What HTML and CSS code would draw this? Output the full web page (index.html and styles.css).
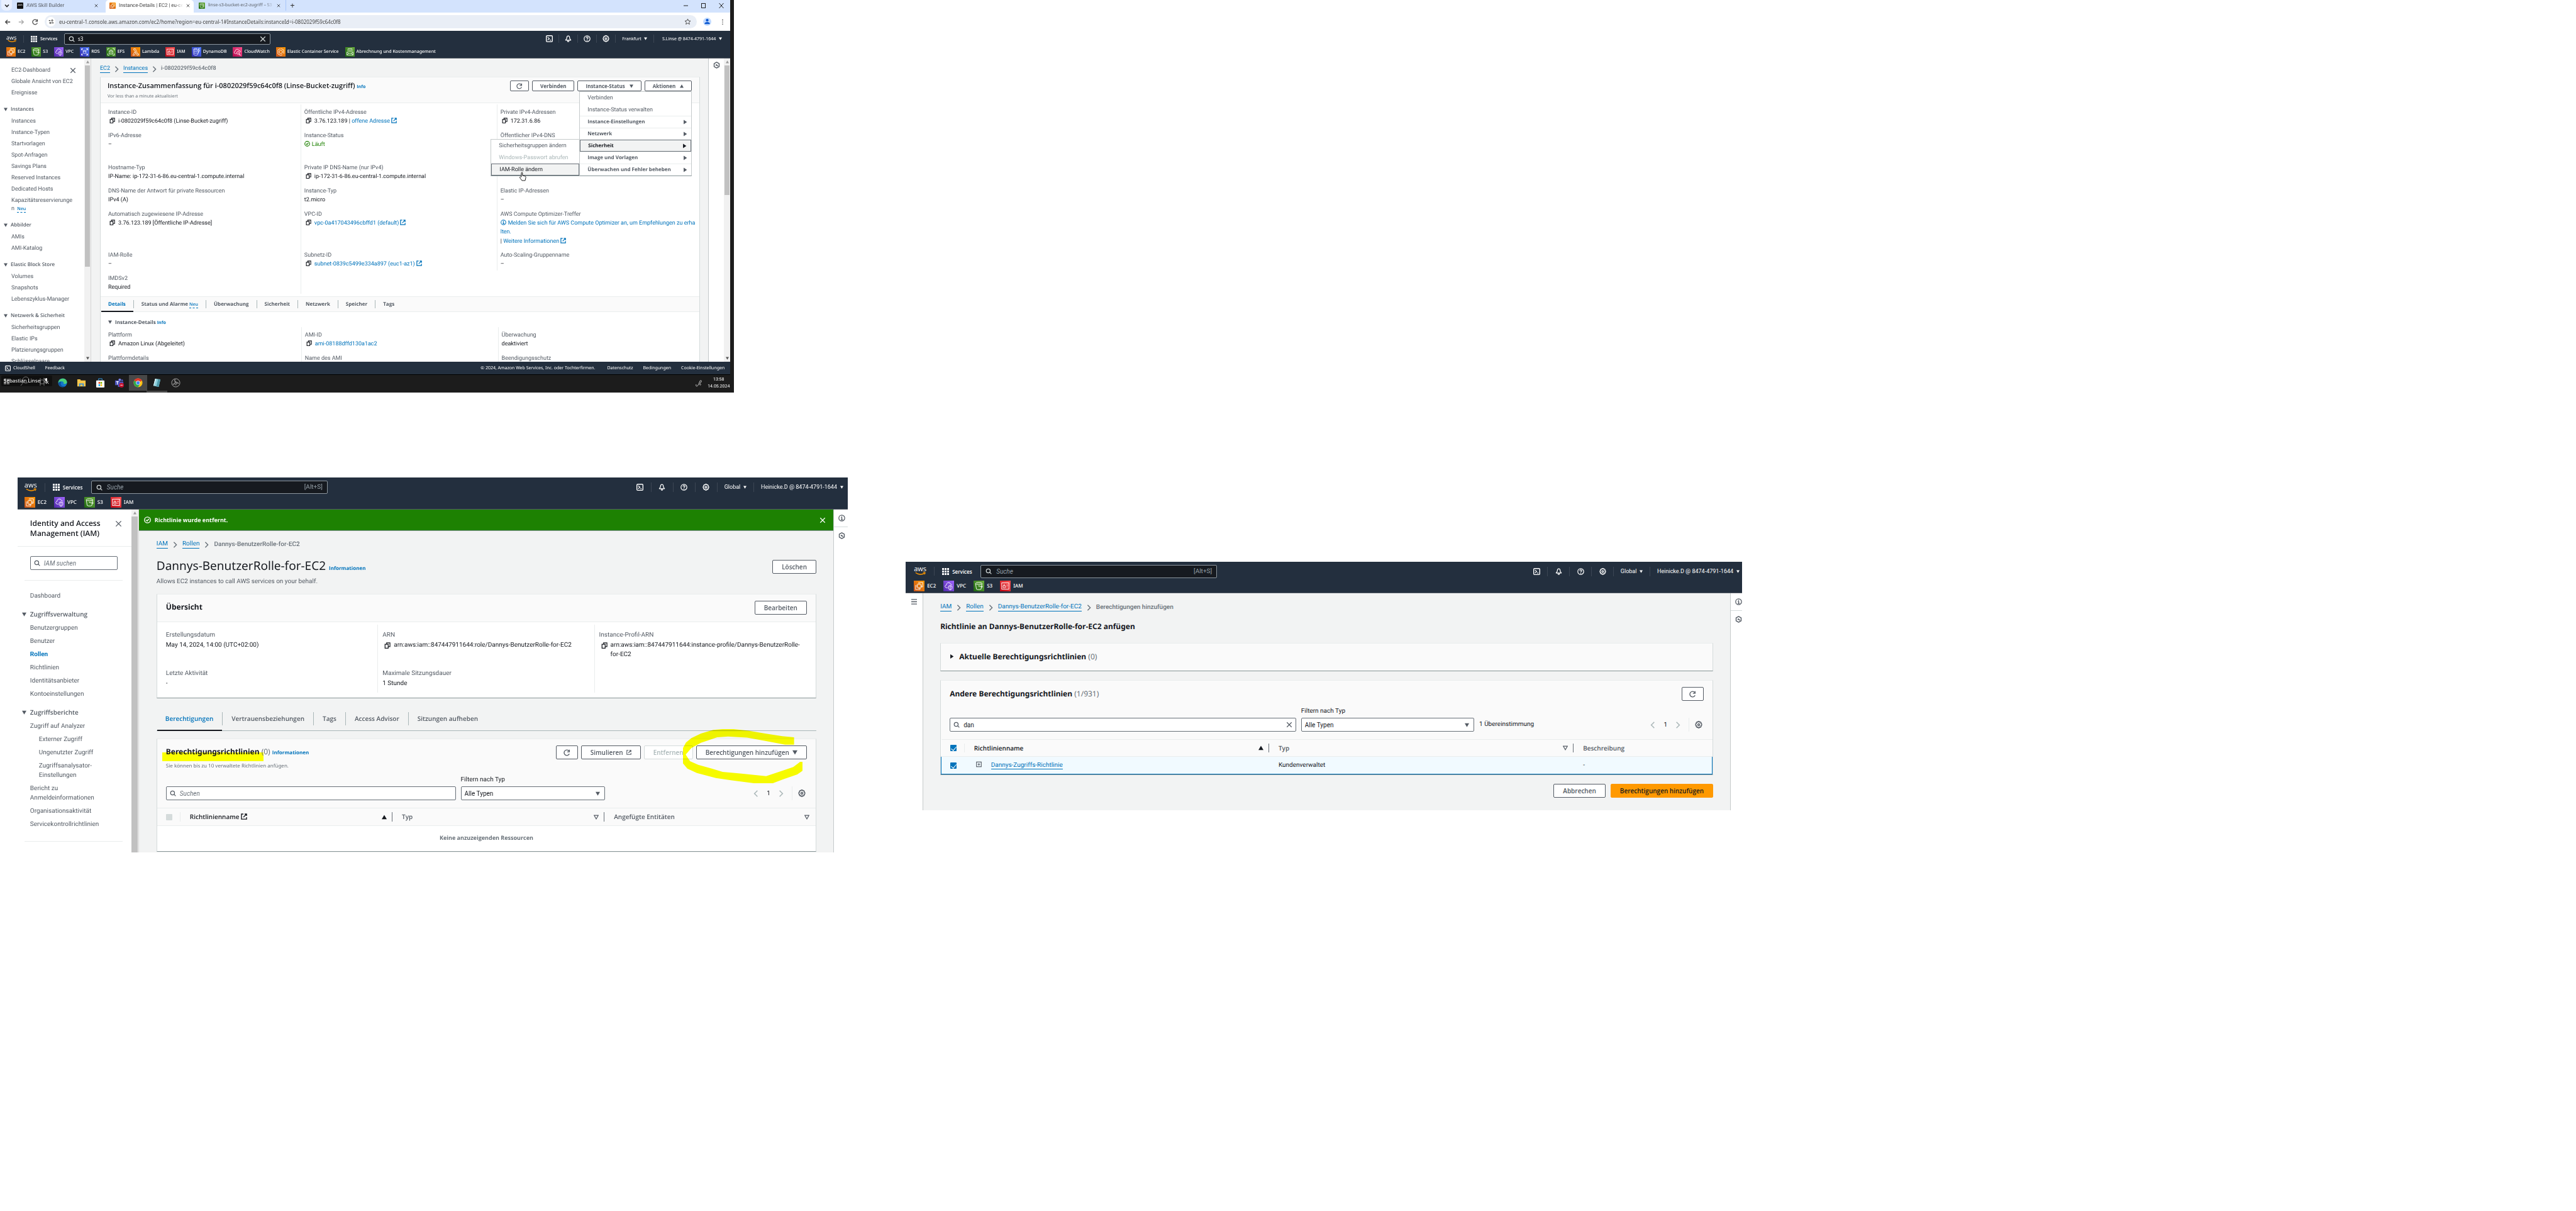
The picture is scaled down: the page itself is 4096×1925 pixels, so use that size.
FILE: index.html
```html
<!DOCTYPE html>
<html lang="de">
<head>
<meta charset="utf-8">
<meta name="viewport" content="width=device-width, initial-scale=1">
<title>AWS – EC2 und IAM</title>
<link rel="stylesheet" href="styles.css">
</head>
<body>
<svg class="defs" aria-hidden="true">
  <symbol id="smile" viewBox="0 0 20 7"><path d="M1 1.5C6 5.4 13 5.6 17.6 2.6" fill="none" stroke="#f90" stroke-width="1.7"/><path d="M14.8 1.2c1.6-.5 3.4-.5 3.8 0s-.2 2.400-1.300 3.600" fill="none" stroke="#f90" stroke-width="1.300"/></symbol>
  <symbol id="grid" viewBox="0 0 11 11"><path d="M0 0h3v3H0zM4 0h3v3H4zM8 0h3v3H8zM0 4h3v3H0zM4 4h3v3H4zM8 4h3v3H8zM0 8h3v3H0zM4 8h3v3H4zM8 8h3v3H8z" fill="currentColor"/></symbol>
  <symbol id="search" viewBox="0 0 16 16"><circle cx="7" cy="7" r="5" fill="none" stroke="currentColor" stroke-width="2"/><path d="M11 11l4 4" stroke="currentColor" stroke-width="2"/></symbol>
  <symbol id="x" viewBox="0 0 16 16"><path d="M2 2l12 12M14 2L2 14" stroke="currentColor" stroke-width="2" fill="none"/></symbol>
  <symbol id="shell" viewBox="0 0 16 16"><rect x="1" y="1" width="14" height="14" rx="2" fill="none" stroke="currentColor" stroke-width="2"/><path d="M4 4.500l4 3.500-4 3.500M9 11.500h3" fill="none" stroke="currentColor" stroke-width="1.800"/></symbol>
  <symbol id="bell" viewBox="0 0 16 16"><path d="M8 1.500c-2.600 0-3.200 2.200-3.200 4.500 0 2-1.300 3.500-2.800 5.300h12c-1.500-1.800-2.800-3.300-2.800-5.300 0-2.300-.6-4.500-3.200-4.500z" fill="none" stroke="currentColor" stroke-width="1.800" stroke-linejoin="round"/><path d="M6.500 11.500v2.500c.6 1.200 2.400 1.200 3 0v-2.500" fill="none" stroke="currentColor" stroke-width="1.800"/></symbol>
  <symbol id="help" viewBox="0 0 16 16"><circle cx="8" cy="8" r="6.800" fill="none" stroke="currentColor" stroke-width="1.800"/><path d="M5.800 6.500c0-3 4.500-3 4.500-.4 0 1.500-2.200 1.600-2.200 3.300M8 11v1.700" fill="none" stroke="currentColor" stroke-width="1.800"/></symbol>
  <symbol id="gear" viewBox="0 0 16 16"><path d="M6.700 1h2.600l.5 1.800 1.700-.8 1.900 1.900-.9 1.700 1.900.6v3.200l-1.900.5.9 1.800-1.900 1.900-1.700-.9-.5 1.900H6.700l-.5-1.900-1.700.9-1.900-1.900.9-1.800-1.900-.5V6.200l1.900-.6-.9-1.700L4.500 2l1.700.8z" fill="none" stroke="currentColor" stroke-width="1.800" stroke-linejoin="round"/><circle cx="8" cy="8" r="2" fill="none" stroke="currentColor" stroke-width="1.800"/></symbol>
  <symbol id="down" viewBox="0 0 10 10"><path d="M0 1h10L5 9.500z" fill="currentColor"/></symbol>
  <symbol id="up" viewBox="0 0 10 10"><path d="M0 9h10L5 .5z" fill="currentColor"/></symbol>
  <symbol id="right" viewBox="0 0 10 10"><path d="M1.500 0v10L9 5z" fill="currentColor"/></symbol>
  <symbol id="sort" viewBox="0 0 10 10"><path d="M1 1.500h8L5 8.500z" fill="none" stroke="currentColor" stroke-width="1.500"/></symbol>
  <symbol id="chev" viewBox="0 0 10 14"><path d="M2 1l6 6-6 6" fill="none" stroke="currentColor" stroke-width="2"/></symbol>
  <symbol id="chevl" viewBox="0 0 10 14"><path d="M8 1L2 7l6 6" fill="none" stroke="currentColor" stroke-width="2"/></symbol>
  <symbol id="copy" viewBox="0 0 16 16"><path d="M2 5h8v10H2zM6 5V1.500h8.500V11H10" fill="none" stroke="currentColor" stroke-width="2"/></symbol>
  <symbol id="ext" viewBox="0 0 16 16"><path d="M6.500 1.500h-5v13h13v-5M9.500 1.500h5v5M14 2L6.500 9.500" fill="none" stroke="currentColor" stroke-width="2.200"/></symbol>
  <symbol id="reload" viewBox="0 0 16 16"><path d="M13.500 10.500A6.300 6.300 0 1 1 12.600 4M13.500 1v5h-5" fill="none" stroke="currentColor" stroke-width="2"/></symbol>
  <symbol id="ok" viewBox="0 0 16 16"><circle cx="8" cy="8" r="6.800" fill="none" stroke="currentColor" stroke-width="2"/><path d="M4.800 8l2.400 2.500 4-5" fill="none" stroke="currentColor" stroke-width="2"/></symbol>
  <symbol id="info" viewBox="0 0 16 16"><circle cx="8" cy="8" r="6.800" fill="none" stroke="currentColor" stroke-width="1.800"/><path d="M6 7h2.200v4.500M5.800 11.700h4.700M8 3.500v2" fill="none" stroke="currentColor" stroke-width="1.800"/></symbol>
  <symbol id="hex" viewBox="0 0 16 16"><path d="M8 1.200l5.800 3.300v7L8 14.800 2.200 11.500v-7z" fill="none" stroke="currentColor" stroke-width="2" stroke-linejoin="round"/><path d="M7 7.300l4.500 3.200" stroke="currentColor" stroke-width="2"/><circle cx="7.500" cy="7.800" r="1.800" fill="currentColor"/></symbol>
  <symbol id="s-ec2" viewBox="0 0 24 24"><path d="M10 4h10v10h-4M4 10v10h10v-3" fill="none" stroke="#fff" stroke-width="1.200"/><rect x="8" y="8" width="8" height="8" rx="1" fill="none" stroke="#fff" stroke-width="1.200"/><path d="M10 8V6M12 8V6M14 8V6M10 18v-2M12 18v-2M14 18v-2M8 10H6M8 12H6M8 14H6M18 10h-2M18 12h-2M18 14h-2" stroke="#fff"/></symbol>
  <symbol id="s-s3" viewBox="0 0 24 24"><path d="M4.500 6.500l2 12.500c2 1.600 8.500 1.600 10.500 0l2-12.500" fill="none" stroke="#fff" stroke-width="1.300"/><ellipse cx="11.800" cy="6.200" rx="7.300" ry="2.200" fill="none" stroke="#fff" stroke-width="1.300"/><path d="M12 12l8 2.500c1.200-.8-.5-2-2-2.800" fill="none" stroke="#fff" stroke-width="1.200"/><circle cx="11.800" cy="12" r="1" fill="#fff"/></symbol>
  <symbol id="s-vpc" viewBox="0 0 24 24"><path d="M9.500 16H7.500C2.500 15.500 3 10 6.700 10 6.500 3.500 15 2.500 16.500 8.200c1.300-.4 2.500.3 2.800 1.500" fill="none" stroke="#fff" stroke-width="1.300"/><path d="M15.500 11l4 1.500V17c0 2-2.500 3.200-4 4-1.500-.8-4-2-4-4v-4.500zM15.500 11v10" fill="none" stroke="#fff" stroke-width="1.300"/></symbol>
  <symbol id="s-rds" viewBox="0 0 24 24"><path d="M4 8V4h4M4 4l4 4M20 8V4h-4M20 4l-4 4M4 16v4h4M4 20l4-4M20 16v4h-4M20 20l-4-4M8.500 9.500v5.500c1.500 1.500 5.500 1.500 7 0V9.500" fill="none" stroke="#fff" stroke-width="1.200"/><ellipse cx="12" cy="9.500" rx="3.500" ry="1.400" fill="none" stroke="#fff" stroke-width="1.200"/></symbol>
  <symbol id="s-efs" viewBox="0 0 24 24"><path d="M3.500 8V3.500H8M16 3.500h4.500V8M3.500 16v4.500H8M16 20.500h4.500V16M7.500 10v7.500h9V10zM9 10c0-4 6-4 6 0M10 14h4" fill="none" stroke="#fff" stroke-width="1.300"/></symbol>
  <symbol id="s-lambda" viewBox="0 0 24 24"><path d="M7.500 4h4.200l6 13.500 2-.7.8 2.700-4.500 1.300L10 7.500H7.500zM10 11.500L5 20.500h4l3-5.500z" fill="none" stroke="#fff" stroke-width="1.200"/></symbol>
  <symbol id="s-iam" viewBox="0 0 24 24"><rect x="4" y="5" width="16" height="14" fill="none" stroke="#fff" stroke-width="1.300"/><path d="M7 11.500h5V16H7zM8 11.500C8 7.500 11 7.500 11 11.500M14.500 10H18M14.500 14H17" fill="none" stroke="#fff" stroke-width="1.200"/></symbol>
  <symbol id="s-ddb" viewBox="0 0 24 24"><path d="M5 5v14c2 2 8 2 10 0v-4M5 9.500c2 1.500 6 1.500 8 .5M5 14c2 1.500 6 1.500 8 .5M18 3l-4 7h3l-1.500 6L20 8h-3l2-5z" fill="none" stroke="#fff" stroke-width="1.200"/><ellipse cx="9.500" cy="5" rx="4.500" ry="1.600" fill="none" stroke="#fff" stroke-width="1.200"/></symbol>
  <symbol id="s-cw" viewBox="0 0 24 24"><path d="M9 16.500H7C2.500 16 3 10.500 6.500 10.500 6.500 4 14.500 3.500 16 9c3-.7 4.500 2 3.500 4" fill="none" stroke="#fff" stroke-width="1.300"/><circle cx="13.500" cy="14.500" r="3.300" fill="none" stroke="#fff" stroke-width="1.300"/><path d="M16 17l4 4" stroke="#fff" stroke-width="1.800"/></symbol>
  <symbol id="s-ecs" viewBox="0 0 24 24"><path d="M11 3.500L4.500 7v10l7.500 4 4-2.200M13 3.500L19.500 7v9.500M12 7.500l4 2.200v4.600l-4 2.200-4-2.200V9.700z" fill="none" stroke="#fff" stroke-width="1.300"/></symbol>
  <symbol id="s-bill" viewBox="0 0 24 24"><path d="M7 13V4h10v9M4 12.500V20h16v-7.500l-4 3H8zM9.500 7.500h5M9.500 10.500h5M4 20l5-4.500M20 20l-5-4.500" fill="none" stroke="#fff" stroke-width="1.200"/></symbol>
</svg>

<main class="canvas">

<!-- EC2-Instance im Browser -->
<section class="shot shot-ec2" aria-label="EC2-Instance">
  <div class="browser">
    <div class="tabstrip">
      <button class="tab-menu" aria-label="Tabs durchsuchen"><svg viewBox="0 0 10 10"><path d="M2 3.500l3 3 3-3" fill="none" stroke="#222" stroke-width="1.600"/></svg></button>
      <div class="btab"><span class="fav-dark">aws</span><span class="btab-t">AWS Skill Builder</span><svg class="bx"><use href="#x"/></svg></div>
      <div class="btab active"><svg class="fi orange"><use href="#s-ec2"/></svg><span class="btab-t fade">Instance-Details | EC2 | eu-cent</span><svg class="bx"><use href="#x"/></svg></div>
      <div class="btab"><svg class="fi green"><use href="#s-s3"/></svg><span class="btab-t fade">linse-s3-bucket-ec2-zugriff – S3</span><svg class="bx"><use href="#x"/></svg></div>
      <button class="plus" aria-label="Neuer Tab">+</button>
      <div class="winctl"><svg viewBox="0 0 12 12"><path d="M2 6h7" stroke="#222"/></svg><svg viewBox="0 0 12 12"><rect x="2.500" y="2.500" width="6" height="7" fill="none" stroke="#222"/></svg><svg viewBox="0 0 12 12"><path d="M2.500 2l7 8M9.500 2l-7 8" stroke="#222"/></svg></div>
    </div>
    <div class="toolbar">
      <svg class="tb" viewBox="0 0 12 12"><path d="M11 6H2M6 2L2 6l4 4" fill="none" stroke="#444" stroke-width="1.600"/></svg>
      <svg class="tb" viewBox="0 0 12 12"><path d="M1 6h9M6 2l4 4-4 4" fill="none" stroke="#aaa" stroke-width="1.600"/></svg>
      <svg class="tb"><use href="#reload"/></svg>
      <div class="urlbar"><span class="site"><svg viewBox="0 0 12 12"><path d="M1 3.500h3M7 8.500h4" stroke="#333" stroke-width="1.500"/><circle cx="8" cy="3.500" r="1.500" fill="none" stroke="#333" stroke-width="1.300"/><circle cx="4" cy="8.500" r="1.500" fill="none" stroke="#333" stroke-width="1.300"/></svg></span><input class="url" aria-label="Adresse" value="eu-central-1.console.aws.amazon.com/ec2/home?region=eu-central-1#InstanceDetails:instanceId=i-0802029f59c64c0f8"><svg class="star" viewBox="0 0 12 12"><path d="M6 1.200l1.400 3.200 3.500.3-2.600 2.300.8 3.400L6 8.600l-3.100 1.800.8-3.400L1.100 4.700l3.500-.3z" fill="none" stroke="#444"/></svg></div>
      <span class="avatar"><svg viewBox="0 0 12 12"><circle cx="6" cy="3.800" r="2" fill="#0b57d0"/><path d="M2 9.500c0-4 8-4 8 0z" fill="#0b57d0"/></svg></span>
      <svg class="dots" viewBox="0 0 4 12"><circle cx="2" cy="2" r="1" fill="#444"/><circle cx="2" cy="6" r="1" fill="#444"/><circle cx="2" cy="10" r="1" fill="#444"/></svg>
    </div>
    <header class="aws">
      <div class="aws-top">
        <a href="#" class="logo"><span>aws</span><svg><use href="#smile"/></svg></a>
        <button class="services"><svg><use href="#grid"/></svg>Services</button>
        <label class="gsearch"><svg><use href="#search"/></svg><input value="s3" aria-label="Suche"><svg><use href="#x"/></svg></label>
        <div class="tools"><button aria-label="CloudShell"><svg><use href="#shell"/></svg></button><button aria-label="Benachrichtigungen"><svg><use href="#bell"/></svg></button><button aria-label="Hilfe"><svg><use href="#help"/></svg></button><button aria-label="Einstellungen"><svg><use href="#gear"/></svg></button><button class="wide">Frankfurt<svg><use href="#down"/></svg></button><button class="user">S.Linse @ 8474-4791-1644<svg><use href="#down"/></svg></button></div>
      </div>
      <nav class="favs">
        <a href="#"><svg class="orange"><use href="#s-ec2"/></svg>EC2</a><a href="#"><svg class="green"><use href="#s-s3"/></svg>S3</a><a href="#"><svg class="violet"><use href="#s-vpc"/></svg>VPC</a><a href="#"><svg class="blue"><use href="#s-rds"/></svg>RDS</a><a href="#"><svg class="green"><use href="#s-efs"/></svg>EFS</a><a href="#"><svg class="orange"><use href="#s-lambda"/></svg>Lambda</a><a href="#"><svg class="red"><use href="#s-iam"/></svg>IAM</a><a href="#"><svg class="blue"><use href="#s-ddb"/></svg>DynamoDB</a><a href="#"><svg class="pink"><use href="#s-cw"/></svg>CloudWatch</a><a href="#"><svg class="orange"><use href="#s-ecs"/></svg>Elastic Container Service</a><a href="#"><svg class="green"><use href="#s-bill"/></svg>Abrechnung und Kostenmanagement</a>
      </nav>
    </header>
    <div class="work">
      <nav class="side">
        <svg class="side-x"><use href="#x"/></svg>
        <ul><li><a href="#">EC2-Dashboard</a></li><li><a href="#">Globale Ansicht von EC2</a></li><li><a href="#">Ereignisse</a></li></ul>
        <h3><svg><use href="#down"/></svg>Instances</h3>
        <ul><li><a href="#">Instances</a></li><li><a href="#">Instance-Typen</a></li><li><a href="#">Startvorlagen</a></li><li><a href="#">Spot-Anfragen</a></li><li><a href="#">Savings Plans</a></li><li><a href="#">Reserved Instances</a></li><li><a href="#">Dedicated Hosts</a></li><li><a href="#">Kapazitätsreservierunge<br>n</a> <a href="#" class="neu">Neu</a></li></ul>
        <h3><svg><use href="#down"/></svg>Abbilder</h3>
        <ul><li><a href="#">AMIs</a></li><li><a href="#">AMI-Katalog</a></li></ul>
        <h3><svg><use href="#down"/></svg>Elastic Block Store</h3>
        <ul><li><a href="#">Volumes</a></li><li><a href="#">Snapshots</a></li><li><a href="#">Lebenszyklus-Manager</a></li></ul>
        <h3><svg><use href="#down"/></svg>Netzwerk &amp; Sicherheit</h3>
        <ul><li><a href="#">Sicherheitsgruppen</a></li><li><a href="#">Elastic IPs</a></li><li><a href="#">Platzierungsgruppen</a></li><li><a href="#">Schlüsselpaare</a></li></ul>
      </nav>
      <div class="sbar"><svg><use href="#up"/></svg><i class="thumb long"></i><svg class="dn"><use href="#down"/></svg></div>
      <div class="page">
        <nav class="crumbs"><a href="#">EC2</a><svg><use href="#chev"/></svg><a href="#">Instances</a><svg><use href="#chev"/></svg><b>i-0802029f59c64c0f8</b></nav>
        <article class="card">
          <div class="card-head">
            <div><h2>Instance-Zusammenfassung für i-0802029f59c64c0f8 (Linse-Bucket-zugriff) <a href="#" class="inf">Info</a></h2><p class="sub">Vor less than a minute aktualisiert</p></div>
            <div class="btns"><button class="btn sq" aria-label="Aktualisieren"><svg><use href="#reload"/></svg></button><button class="btn">Verbinden</button><button class="btn">Instance-Status<svg><use href="#down"/></svg></button><button class="btn">Aktionen<svg><use href="#up"/></svg></button></div>
          </div>
          <div class="cols">
            <dl>
              <div><dt>Instance-ID</dt><dd><svg><use href="#copy"/></svg>i-0802029f59c64c0f8 (Linse-Bucket-zugriff)</dd></div>
              <div class="tall"><dt>IPv6-Adresse</dt><dd>–</dd></div>
              <div><dt>Hostname-Typ</dt><dd>IP-Name: ip-172-31-6-86.eu-central-1.compute.internal</dd></div>
              <div><dt>DNS-Name der Antwort für private Ressourcen</dt><dd>IPv4 (A)</dd></div>
              <div class="taller"><dt>Automatisch zugewiesene IP-Adresse</dt><dd><svg><use href="#copy"/></svg>3.76.123.189 [Öffentliche IP-Adresse]</dd></div>
              <div><dt>IAM-Rolle</dt><dd>–</dd></div>
              <div><dt>IMDSv2</dt><dd>Required</dd></div>
            </dl>
            <dl>
              <div><dt>Öffentliche IPv4-Adresse</dt><dd><svg><use href="#copy"/></svg>3.76.123.189 | <a href="#">offene Adresse<svg><use href="#ext"/></svg></a></dd></div>
              <div class="tall"><dt>Instance-Status</dt><dd class="run"><svg><use href="#ok"/></svg>Läuft</dd></div>
              <div><dt>Private IP DNS-Name (nur IPv4)</dt><dd><svg><use href="#copy"/></svg>ip-172-31-6-86.eu-central-1.compute.internal</dd></div>
              <div><dt>Instance-Typ</dt><dd>t2.micro</dd></div>
              <div class="taller"><dt>VPC-ID</dt><dd><svg><use href="#copy"/></svg><a href="#">vpc-0a417043496cbffd1 (default)<svg><use href="#ext"/></svg></a></dd></div>
              <div><dt>Subnetz-ID</dt><dd><svg><use href="#copy"/></svg><a href="#">subnet-0839c5499e334a897 (euc1-az1)<svg><use href="#ext"/></svg></a></dd></div>
            </dl>
            <dl>
              <div><dt>Private IPv4-Adressen</dt><dd><svg><use href="#copy"/></svg>172.31.6.86</dd></div>
              <div class="tall"><dt>Öffentlicher IPv4-DNS</dt></div>
              <div><dt></dt></div>
              <div><dt>Elastic IP-Adressen</dt><dd>–</dd></div>
              <div class="taller"><dt>AWS Compute Optimizer-Treffer</dt><dd><a href="#"><svg class="ii"><use href="#info"/></svg>Melden Sie sich für AWS Compute Optimizer an, um Empfehlungen zu erha<br>lten.</a></dd><dd class="more">| <a href="#">Weitere Informationen<svg><use href="#ext"/></svg></a></dd></div>
              <div><dt>Auto-Scaling-Gruppenname</dt><dd>–</dd></div>
            </dl>
          </div>
          <nav class="tabs"><a href="#" class="on">Details</a><a href="#">Status und Alarme <span class="neu">Neu</span></a><a href="#">Überwachung</a><a href="#">Sicherheit</a><a href="#">Netzwerk</a><a href="#">Speicher</a><a href="#">Tags</a></nav>
          <h3 class="sect"><svg><use href="#down"/></svg>Instance-Details <a href="#" class="inf">Info</a></h3>
          <div class="cols more-cols">
            <dl><div><dt>Plattform</dt><dd><svg><use href="#copy"/></svg>Amazon Linux (Abgeleitet)</dd></div><div><dt>Plattformdetails</dt></div></dl>
            <dl><div><dt>AMI-ID</dt><dd><svg><use href="#copy"/></svg><a href="#">ami-08188dffd130a1ac2</a></dd></div><div><dt>Name des AMI</dt></div></dl>
            <dl><div><dt>Überwachung</dt><dd>deaktiviert</dd></div><div><dt>Beendigungsschutz</dt></div></dl>
          </div>
          <ul class="menu">
            <li>Verbinden</li><li>Instance-Status verwalten</li><li class="g">Instance-Einstellungen<svg><use href="#right"/></svg></li><li class="g">Netzwerk<svg><use href="#right"/></svg></li><li class="g sel">Sicherheit<svg><use href="#right"/></svg></li><li class="g">Image und Vorlagen<svg><use href="#right"/></svg></li><li class="g">Überwachen und Fehler beheben<svg><use href="#right"/></svg></li>
          </ul>
          <ul class="menu submenu"><li>Sicherheitsgruppen ändern</li><li class="off">Windows-Passwort abrufen</li><li class="sel">IAM-Rolle ändern</li></ul>
          <svg class="cursor" viewBox="0 0 12 15"><path d="M4 8V2c0-1.300 1.800-1.300 1.800 0v4l4 1c1.200.4 1.400 1 1.200 2.500L10 14H5L1.500 9.500c-.6-1 .6-1.800 1.300-1z" fill="#fff" stroke="#222"/></svg>
        </article>
      </div>
      <div class="rail"><svg><use href="#hex"/></svg></div>
      <div class="sbar"><svg><use href="#up"/></svg><i class="thumb"></i><svg class="dn"><use href="#down"/></svg></div>
    </div>
    <footer class="foot"><a href="#"><svg><use href="#shell"/></svg>CloudShell</a><a href="#">Feedback</a><span class="copyr">© 2024, Amazon Web Services, Inc. oder Tochterfirmen.</span><a href="#">Datenschutz</a><a href="#">Bedingungen</a><a href="#">Cookie-Einstellungen</a></footer>
  </div>
  <div class="taskbar">
    <div class="who"><svg class="ghost" viewBox="0 0 80 17"><path d="M4 5h4v4H4zM9 5h4v4H9zM4 10h4v4H4zM9 10h4v4H9z" fill="#777"/><circle cx="39" cy="7" r="5" fill="none" stroke="#777"/><path d="M35 11l-4 5M62 4v12M68 4v12M62 7h6v6h-6z" fill="none" stroke="#777"/></svg><span>Sebastian Linse</span><svg viewBox="0 0 12 12"><rect x="4.500" y="1" width="3" height="6" rx="1.500" fill="#fff"/><path d="M3 6c0 4 6 4 6 0M6 9v2M2 1l8 10" fill="none" stroke="#fff"/></svg></div>
    <svg class="app" viewBox="0 0 16 16"><circle cx="8" cy="8" r="7.500" fill="#1477c9"/><path d="M1 6C3-1 15-1 15.500 7c0 3-4 3.500-6 2.500 1-2 0-4-3-4C4 5.500 2 6 1 9z" fill="#4bd07a"/><path d="M6 7c-3 3 0 8 6 7-3 2-11 1-11-5 1-3 3-3.500 5-2z" fill="#0c4fa0"/></svg>
    <svg class="app" viewBox="0 0 16 16"><path d="M1 2h5l1 2h8v10H1z" fill="#f7c64a"/><path d="M4 14v-5h8v5h-2v-3H6v3z" fill="#3b8fd6"/></svg>
    <svg class="app" viewBox="0 0 16 16"><path d="M5 4V1h6v3" fill="none" stroke="#3aa0e8"/><rect x="1" y="4" width="14" height="12" rx="1" fill="#fff"/><path d="M5 6.500h2.700v3H5z" fill="#f25022"/><path d="M8.300 6.500H11v3H8.300z" fill="#7fba00"/><path d="M5 10.500h2.700v3H5z" fill="#00a4ef"/><path d="M8.300 10.500H11v3H8.300z" fill="#ffb900"/></svg>
    <svg class="app" viewBox="0 0 16 16"><circle cx="9" cy="3" r="2.200" fill="#7b83eb"/><circle cx="13" cy="4" r="1.500" fill="#5059c9"/><path d="M6 6h9v6l-4 3H6z" fill="#5059c9"/><rect x="1" y="4" width="8" height="8" fill="#4b53bc"/><path d="M3 6h4M5 6v5" stroke="#fff" stroke-width="1.200"/><circle cx="12" cy="12" r="4" fill="#c4122f"/><path d="M10 12h4" stroke="#fff"/></svg>
    <span class="app-on"><svg class="app" viewBox="0 0 16 16"><circle cx="8" cy="8" r="7.500" fill="#fbc116"/><path d="M8 8L1.500 4.300C4-1 12-1 14.500 4.300z" fill="#e33b2e"/><path d="M8 8L1.500 4.300C-1 9 2 15 8 15.500L11 10z" fill="#2da94f"/><circle cx="8" cy="8" r="3.500" fill="#fff"/><circle cx="8" cy="8" r="2.800" fill="#4285f4"/></svg></span>
    <span class="app-np"><svg class="app" viewBox="0 0 16 16"><path d="M5 1l9 1-3 13-9-2z" fill="#8fd0dc"/><path d="M5 1l2 0-4 12-1 0z" fill="#dff3f6"/><path d="M10 2l4 0-3 13-4-1z" fill="#4f9aab"/></svg></span>
    <svg class="app" viewBox="0 0 16 16"><circle cx="8" cy="8" r="7" fill="#222" stroke="#aaa"/><path d="M7 2c-2 3 0 5 3 5M13 9c-3-2-5 0-5 3M3 10c3 1 4-1 4-4" fill="none" stroke="#aaa" stroke-width="1.200"/></svg>
    <div class="clock"><svg viewBox="0 0 12 12"><path d="M2 8c-1 2 0 3 1 3s3-3 4-6 2-4 3-3-1 3-2 5 0 3 2 1" fill="none" stroke="#ccc"/></svg><span>13:58<br>14.05.2024</span></div>
  </div>
</section>

<!-- IAM-Rolle -->
<section class="shot shot-role" aria-label="IAM-Rolle">
  <header class="aws">
    <div class="aws-top">
      <a href="#" class="logo"><span>aws</span><svg><use href="#smile"/></svg></a>
      <button class="services"><svg><use href="#grid"/></svg>Services</button>
      <label class="gsearch"><svg><use href="#search"/></svg><input placeholder="Suche" aria-label="Suche"><span>[Alt+S]</span></label>
      <div class="tools"><button aria-label="CloudShell"><svg><use href="#shell"/></svg></button><button aria-label="Benachrichtigungen"><svg><use href="#bell"/></svg></button><button aria-label="Hilfe"><svg><use href="#help"/></svg></button><button aria-label="Einstellungen"><svg><use href="#gear"/></svg></button><button class="wide">Global<svg><use href="#down"/></svg></button><button class="user">Heinicke.D @ 8474-4791-1644<svg><use href="#down"/></svg></button></div>
    </div>
    <nav class="favs"><a href="#"><svg class="orange"><use href="#s-ec2"/></svg>EC2</a><a href="#"><svg class="violet"><use href="#s-vpc"/></svg>VPC</a><a href="#"><svg class="green"><use href="#s-s3"/></svg>S3</a><a href="#"><svg class="red"><use href="#s-iam"/></svg>IAM</a></nav>
  </header>
  <div class="work">
    <nav class="side">
      <div class="side-title"><h2>Identity and Access Management (IAM)</h2><svg><use href="#x"/></svg></div>
      <label class="box side-search"><svg><use href="#search"/></svg><input placeholder="IAM suchen" aria-label="IAM suchen"></label>
      <hr>
      <ul class="first"><li><a href="#">Dashboard</a></li></ul>
      <h3><svg><use href="#down"/></svg>Zugriffsverwaltung</h3>
      <ul><li><a href="#">Benutzergruppen</a></li><li><a href="#">Benutzer</a></li><li><a href="#" class="cur">Rollen</a></li><li><a href="#">Richtlinien</a></li><li><a href="#">Identitätsanbieter</a></li><li><a href="#">Kontoeinstellungen</a></li></ul>
      <h3><svg><use href="#down"/></svg>Zugriffsberichte</h3>
      <ul><li><a href="#">Zugriff auf Analyzer</a></li><li class="in"><a href="#">Externer Zugriff</a></li><li class="in"><a href="#">Ungenutzter Zugriff</a></li><li class="in"><a href="#">Zugriffsanalysator-<br>Einstellungen</a></li><li><a href="#">Bericht zu<br>Anmeldeinformationen</a></li><li><a href="#">Organisationsaktivität</a></li><li><a href="#">Servicekontrollrichtlinien</a></li></ul>
      <hr>
    </nav>
    <div class="sbar"><svg><use href="#up"/></svg><i class="thumb full"></i></div>
    <div class="mainwrap">
      <div class="flash"><svg><use href="#ok"/></svg><b>Richtlinie wurde entfernt.</b><svg class="fx"><use href="#x"/></svg></div>
      <div class="page">
        <nav class="crumbs"><a href="#">IAM</a><svg><use href="#chev"/></svg><a href="#">Rollen</a><svg><use href="#chev"/></svg><b>Dannys-BenutzerRolle-for-EC2</b></nav>
        <div class="headline"><div><h1>Dannys-BenutzerRolle-for-EC2 <a href="#" class="inf">Informationen</a></h1><p>Allows EC2 instances to call AWS services on your behalf.</p></div><button class="btn">Löschen</button></div>
        <article class="card">
          <div class="card-head"><h2>Übersicht</h2><button class="btn">Bearbeiten</button></div>
          <div class="cols">
            <dl><div class="tall"><dt>Erstellungsdatum</dt><dd>May 14, 2024, 14:00 (UTC+02:00)</dd></div><div><dt>Letzte Aktivität</dt><dd>-</dd></div></dl>
            <dl><div class="tall"><dt>ARN</dt><dd class="cp"><svg><use href="#copy"/></svg>arn:aws:iam::847447911644:role/Dannys-BenutzerRolle-for-EC2</dd></div><div><dt>Maximale Sitzungsdauer</dt><dd>1 Stunde</dd></div></dl>
            <dl><div class="tall"><dt>Instance-Profil-ARN</dt><dd class="cp"><svg><use href="#copy"/></svg><span>arn:aws:iam::847447911644:instance-profile/Dannys-BenutzerRolle-<br>for-EC2</span></dd></div></dl>
          </div>
        </article>
        <nav class="tabs"><a href="#" class="on">Berechtigungen</a><a href="#">Vertrauensbeziehungen</a><a href="#">Tags</a><a href="#">Access Advisor</a><a href="#">Sitzungen aufheben</a></nav>
        <article class="card policies">
          <div class="card-head">
            <div><h2><span class="marked">Berechtigungsrichtlinien</span> <span class="n">(0)</span> <a href="#" class="inf">Informationen</a></h2><p class="sub">Sie können bis zu 10 verwaltete Richtlinien anfügen.</p></div>
            <div class="btns"><button class="btn sq" aria-label="Aktualisieren"><svg><use href="#reload"/></svg></button><button class="btn">Simulieren<svg><use href="#ext"/></svg></button><button class="btn" disabled>Entfernen</button><button class="btn">Berechtigungen hinzufügen<svg><use href="#down"/></svg></button></div>
          </div>
          <div class="filter">
            <label class="box grow"><svg><use href="#search"/></svg><input placeholder="Suchen" aria-label="Suchen"></label>
            <label class="fsel">Filtern nach Typ<span class="box"><select><option>Alle Typen</option></select><svg class="ca"><use href="#down"/></svg></span></label>
            <div class="pager"><svg><use href="#chevl"/></svg><b>1</b><svg><use href="#chev"/></svg><button aria-label="Einstellungen"><svg><use href="#gear"/></svg></button></div>
          </div>
          <table>
            <colgroup><col class="c0"><col class="c1"><col class="c1"><col></colgroup>
            <thead><tr><th><div class="th light"><input type="checkbox" aria-label="Alle auswählen" disabled></div></th><th><div class="th dark"><span>Richtlinienname <svg><use href="#ext"/></svg></span><svg><use href="#up"/></svg></div></th><th><div class="th">Typ<svg><use href="#sort"/></svg></div></th><th><div class="th last">Angefügte Entitäten<svg><use href="#sort"/></svg></div></th></tr></thead>
            <tbody><tr><td colspan="4" class="empty">Keine anzuzeigenden Ressourcen</td></tr></tbody>
          </table>
          <svg class="ring" viewBox="934 447 440 368" preserveAspectRatio="none"><path d="M1343 503L1300 495 1240 478 1175 458 1120 447 1080 447 1045 452 1000 477 965 508 945 538 934 575V680L950 715 985 745 1055 780 1110 795 1195 815H1265L1300 790 1355 755 1374 730V670H1365L1340 705 1275 745 1240 767 1150 750 1080 738 1040 715 990 690 960 665 944 620 965 575 1000 540 1060 503 1100 497 1170 505 1240 528 1310 553H1343z" fill="#fbff00"/></svg>
        </article>
      </div>
    </div>
    <div class="rail"><svg><use href="#info"/></svg><hr><svg><use href="#hex"/></svg></div>
  </div>
</section>

<!-- Richtlinie anfügen -->
<section class="shot shot-attach" aria-label="Richtlinie anfügen">
  <header class="aws">
    <div class="aws-top">
      <a href="#" class="logo"><span>aws</span><svg><use href="#smile"/></svg></a>
      <button class="services"><svg><use href="#grid"/></svg>Services</button>
      <label class="gsearch"><svg><use href="#search"/></svg><input placeholder="Suche" aria-label="Suche"><span>[Alt+S]</span></label>
      <div class="tools"><button aria-label="CloudShell"><svg><use href="#shell"/></svg></button><button aria-label="Benachrichtigungen"><svg><use href="#bell"/></svg></button><button aria-label="Hilfe"><svg><use href="#help"/></svg></button><button aria-label="Einstellungen"><svg><use href="#gear"/></svg></button><button class="wide">Global<svg><use href="#down"/></svg></button><button class="user">Heinicke.D @ 8474-4791-1644<svg><use href="#down"/></svg></button></div>
    </div>
    <nav class="favs"><a href="#"><svg class="orange"><use href="#s-ec2"/></svg>EC2</a><a href="#"><svg class="violet"><use href="#s-vpc"/></svg>VPC</a><a href="#"><svg class="green"><use href="#s-s3"/></svg>S3</a><a href="#"><svg class="red"><use href="#s-iam"/></svg>IAM</a></nav>
  </header>
  <div class="work">
    <div class="burger"><svg viewBox="0 0 10 10"><path d="M0 1h10M0 5h10M0 9h10" stroke="currentColor" stroke-width="1.500"/></svg></div>
    <div class="page">
      <nav class="crumbs"><a href="#">IAM</a><svg><use href="#chev"/></svg><a href="#">Rollen</a><svg><use href="#chev"/></svg><a href="#">Dannys-BenutzerRolle-for-EC2</a><svg><use href="#chev"/></svg><b>Berechtigungen hinzufügen</b></nav>
      <h1>Richtlinie an Dannys-BenutzerRolle-for-EC2 anfügen</h1>
      <article class="card fold"><h2><svg><use href="#right"/></svg>Aktuelle Berechtigungsrichtlinien <span class="n">(0)</span></h2></article>
      <article class="card policies">
        <div class="card-head"><h2>Andere Berechtigungsrichtlinien <span class="n">(1/931)</span></h2><button class="btn sq" aria-label="Aktualisieren"><svg><use href="#reload"/></svg></button></div>
        <div class="filter">
          <label class="box grow"><svg><use href="#search"/></svg><input value="dan" aria-label="Suchen"><svg><use href="#x"/></svg></label>
          <label class="fsel">Filtern nach Typ<span class="box"><select><option>Alle Typen</option></select><svg class="ca"><use href="#down"/></svg></span></label>
          <span class="hits">1 Übereinstimmung</span>
          <div class="pager"><svg><use href="#chevl"/></svg><b>1</b><svg><use href="#chev"/></svg><button aria-label="Einstellungen"><svg><use href="#gear"/></svg></button></div>
        </div>
        <table>
          <colgroup><col class="c0"><col class="c1"><col class="c1"><col></colgroup>
          <thead><tr><th><div class="th light"><input type="checkbox" aria-label="Alle auswählen" checked></div></th><th><div class="th dark">Richtlinienname<svg><use href="#up"/></svg></div></th><th><div class="th">Typ<svg><use href="#sort"/></svg></div></th><th><div class="th last">Beschreibung</div></th></tr></thead>
          <tbody><tr class="picked"><td><input type="checkbox" aria-label="Dannys-Zugriffs-Richtlinie" checked></td><td><svg class="plusbox" viewBox="0 0 12 12"><rect x="1" y="1" width="10" height="10" fill="none" stroke="currentColor" stroke-width="1.500"/><path d="M6 3.500v5M3.500 6h5" stroke="currentColor" stroke-width="1.500"/></svg><a href="#">Dannys-Zugriffs-Richtlinie</a></td><td>Kundenverwaltet</td><td>-</td></tr></tbody>
        </table>
      </article>
      <div class="actions"><button class="btn">Abbrechen</button><button class="btn primary">Berechtigungen hinzufügen</button></div>
    </div>
    <div class="rail"><svg><use href="#info"/></svg><hr><svg><use href="#hex"/></svg></div>
  </div>
</section>
</main>
</body>
</html>
```
FILE: styles.css
```css
:root { --text: Roboto, "Noto Sans", sans-serif; --strong: "Open Sans", "Noto Sans", sans-serif; --chrome: "Noto Sans", "Open Sans", sans-serif; }
* { box-sizing: border-box; }
body { margin: 0; background: #fff; font-family: var(--text); color: #16191f; text-rendering: geometricPrecision; }
h1, h2, h3, p, ul, dl, dd { margin: 0; padding: 0; }
ul { list-style: none; }
a { color: #0073bb; text-decoration: none; }
button, input, select { font: inherit; color: inherit; margin: 0; padding: 0; border: 0; background: none; border-radius: 0; }
input, select { min-width: 0; outline: 0; appearance: none; }
input::placeholder { font-style: italic; color: inherit; opacity: 1; }
svg { flex: none; display: inline-block; width: 1em; height: 1em; vertical-align: middle; }
.defs { position: absolute; width: 0; height: 0; }
.canvas { position: relative; min-height: 100vh; overflow: hidden; }

.orange { background: linear-gradient(45deg, #c8511b, #f90); }
.green { background: linear-gradient(45deg, #1b660f, #6cae3e); }
.violet { background: linear-gradient(45deg, #4d27a8, #a166ff); }
.blue { background: linear-gradient(45deg, #2e27ad, #527fff); }
.red { background: linear-gradient(45deg, #bd0816, #ff5252); }
.pink { background: linear-gradient(45deg, #b0084d, #ff4f8b); }

/* Fenster auf der freien Fläche */
.shot { position: absolute; overflow: hidden; display: flex; flex-direction: column; font-size: 10px; line-height: 15px; }
.shot-ec2 { left: 0; top: 0; width: 28.5%; height: 624px; font-size: 9px; line-height: 13px; background: #1c1c1c; }
.shot-role { left: 0.68%; top: 759px; width: 32.23%; height: 596px; }
.shot-attach { left: 35.16%; top: 893px; width: 32.47%; height: 395px; }

/* Browserrahmen */
.browser { margin-right: 6px; height: 596px; display: flex; flex-direction: column; border-bottom: 1px solid #000; }
.tabstrip { height: 20px; flex: none; background: #d3e3fd; display: flex; padding-bottom: 3px; font-family: var(--chrome); }
.tab-menu { width: 17px; height: 17px; margin: 0 1px 0 2px; border-radius: 0 0 7px 7px; background: #e9f0fe; font-size: 10px; line-height: 8px; }
.btab { display: flex; align-items: center; gap: 5px; width: 148px; padding: 0 12px 0 7px; color: #5a5f66; }
.btab.active { width: 140px; height: 20px; padding: 0 6px 3px; background: #fff; color: #444; border-radius: 5px 5px 0 0; }
.btab.active + .btab { width: 147px; padding: 0 8px; border-right: 1px solid #a8c7fa; }
.btab-t { flex: 1; overflow: hidden; white-space: nowrap; font-size: 8px; font-family: var(--text); }
.fade { mask-image: linear-gradient(90deg, #000 88%, transparent); }
.btab:not(.active) .fade { font-size: 7px; font-family: var(--chrome); }
.fi, .fav-dark { width: 10px; height: 10px; border-radius: 1px; }
.fav-dark { background: #111; color: #fff; font-size: 4px; line-height: 9px; text-align: center; }
.bx { width: 6px; height: 6px; color: #222; }
.plus { width: 20px; font-size: 13px; line-height: 15px; color: #333; }
.winctl { margin-left: auto; display: flex; align-items: center; gap: 16px; padding-right: 8px; }
.winctl svg { width: 12px; height: 12px; }
.toolbar { height: 29px; flex: none; background: #fff; display: flex; align-items: center; color: #444; padding-left: 7px; }
.tb { width: 10px; height: 10px; margin-right: 12px; }
.tb + .tb + .tb { margin-right: 10px; }
.urlbar { flex: 1; height: 21px; border-radius: 11px; background: #e9eef6; display: flex; align-items: center; padding: 0 9px 0 3px; }
.site { width: 14px; height: 15px; border-radius: 7px; background: #fff; display: flex; align-items: center; justify-content: center; margin-right: 6px; }
.url { flex: 1; font-size: 8px; font-family: var(--chrome); color: #444; }
.star { width: 11px; height: 11px; }
.avatar { width: 13px; height: 13px; border-radius: 7px; background: #c2dbff; margin: 0 16px 0 10px; display: flex; align-items: center; justify-content: center; font-size: 13px; }
.dots { width: 4px; height: 10px; margin-right: 10px; }

/* AWS-Kopfzeile */
.aws { flex: none; background: #232f3e; color: #fff; border-bottom: 1px solid #545b64; font-size: 9px; height: 51px; }
.shot-attach .aws { height: 50px; }
.shot-ec2 .aws { height: 44px; font-size: 7px; font-family: var(--chrome); }
.aws-top { display: flex; align-items: center; height: 31px; padding-left: 11px; }
.shot-attach .aws-top { height: 30px; padding-left: 13px; }
.shot-ec2 .aws-top { height: 25px; padding-left: 10px; }
.logo { color: #fff; display: flex; flex-direction: column; width: 33px; border-right: 1px solid #3c4654; font-family: var(--strong); font-size: 11px; line-height: 8px; }
.logo svg { width: 21px; height: 6px; }
.shot-ec2 .logo { width: 28px; font-size: 9px; line-height: 7px; }
.shot-ec2 .logo svg { width: 18px; height: 5px; }
.services { display: flex; align-items: center; gap: 5px; width: 73px; padding-left: 12px; font-family: var(--strong); font-weight: 600; font-size: 8px; }
.services svg { width: 11px; height: 11px; }
.shot-ec2 .services { width: 64px; padding-left: 11px; font-size: 7px; }
.shot-ec2 .services svg { width: 10px; height: 10px; }
.gsearch { display: flex; align-items: center; gap: 7px; width: 376px; height: 21px; padding: 0 7px; background: #161a20; border: 1px solid #8d979f; border-radius: 2px; font-size: 10px; color: #95a0a8; }
.gsearch input { flex: 1; }
.gsearch svg { width: 10px; height: 10px; color: #d5dbdb; }
.shot-ec2 .gsearch { width: 328px; height: 18px; padding: 0 6px; gap: 5px; }
.shot-ec2 .gsearch input { color: #fff; font-size: 8px; }
.tools { margin-left: auto; display: flex; align-items: center; }
.tools button { width: 35px; height: 15px; border-right: 1px solid #3c4654; display: flex; align-items: center; justify-content: center; }
.tools button > svg { width: 11px; height: 11px; }
.tools .wide { width: 58px; gap: 5px; }
.tools .user { width: auto; padding: 0 7px 0 11px; gap: 5px; border: 0; white-space: nowrap; }
.shot-attach .tools .user { padding-right: 4px; }
.tools .wide svg, .tools .user svg { width: 5px; height: 5px; }
.shot-ec2 .tools button { width: 30px; height: 13px; }
.shot-ec2 .tools .wide { width: 61px; gap: 4px; }
.shot-ec2 .tools .user { width: auto; padding: 0 13px; gap: 5px; }
.favs { display: flex; gap: 12px; padding-left: 11px; white-space: nowrap; font-family: var(--chrome); font-size: 8px; font-weight: 500; }
.favs a { color: #fff; display: flex; align-items: center; gap: 4px; }
.favs svg { width: 17px; height: 17px; }
.shot-ec2 .favs { gap: 10px; padding: 1px 0 0 10px; font-size: 7px; }
.shot-ec2 .favs a { gap: 3px; }
.shot-ec2 .favs svg { width: 15px; height: 15px; }
.shot-attach .favs { padding-left: 13px; }

/* Arbeitsbereich */
.work { flex: 1; min-height: 0; display: flex; overflow: hidden; background: #f2f3f3; }
.side { width: 181px; flex: none; background: #fff; color: #545b64; overflow: hidden; }
.side a { color: #545b64; }
.side li { padding: 3px 0 3px 20px; }
.side li.in { padding-left: 34px; }
.side .cur { color: #0073bb; font-weight: 700; }
.side h3 { display: flex; align-items: center; gap: 6px; font-family: var(--strong); font-size: inherit; font-weight: 600; padding-left: 7px; margin: 8px 0 4px; }
.side h3 svg { width: 7px; height: 7px; }
.side hr { border: 0; border-top: 1px solid #eaeded; margin: 16px 14px 0 11px; }
.side-title { display: flex; justify-content: space-between; height: 59px; padding: 14px 15px 0 20px; border-bottom: 1px solid #eaeded; color: #16191f; }
.side-title h2 { width: 125px; font-family: var(--strong); font-size: 12px; line-height: 16px; font-weight: 600; }
.side-title svg { width: 11px; height: 11px; margin-top: 3px; color: #545b64; }
.side-search { margin: 15px 22px 0 20px; }
.side .first { margin: 14px 0 11px; }
.shot-role .side ul + h3 { margin-top: 11px; }
.neu { color: #0073bb; font-family: var(--strong); font-weight: 600; font-size: 7px; line-height: 9px; border-bottom: 1px dashed #0073bb; }
.side a.neu { color: #0073bb; margin-left: 2px; }
.shot-ec2 .side { width: 134px; position: relative; padding-top: 10px; }
.shot-ec2 .side li { padding: 3px 0 2px 18px; }
.shot-ec2 .side h3 { margin: 10px 0 4px; gap: 5px; padding-left: 6px; font-size: 8px; }
.shot-ec2 .side h3 svg { width: 6px; height: 6px; }
.side-x { position: absolute; right: 13px; top: 14px; width: 10px; height: 10px; }
.sbar { width: 11px; flex: none; background: #f1f1f1; border-right: 1px solid #d5d5d5; display: flex; flex-direction: column; align-items: center; color: #999; }
.sbar svg { width: 5px; height: 5px; margin: 3px 0; }
.sbar .dn { margin-top: auto; color: #555; }
.thumb { width: 8px; height: 206px; background: #c1c1c1; }
.thumb.long { height: 320px; }
.thumb.full { flex: 1; width: 10px; }
.rail + .sbar { width: 10px; border: 0; }
.shot-role .sbar { width: 12px; }
.page { flex: 1; min-width: 0; padding: 14px 27px 0 28px; }
.mainwrap { flex: 1; min-width: 0; }
.shot-ec2 .page { padding: 10px 13px 0 14px; }
.rail { width: 23px; flex: none; background: #fff; border-left: 1px solid #c5cacb; display: flex; flex-direction: column; align-items: center; color: #545b64; padding: 8px 0 0 4px; }
.rail svg { width: 11px; height: 11px; }
.rail hr { align-self: stretch; border: 0; border-top: 1px solid #d5dbdb; margin: 8px 0 8px -4px; }
.shot-ec2 .rail { width: 25px; padding: 5px 0 0; }
.shot-attach .rail { width: 19px; padding: 8px 0 0 7px; }
.shot-attach .rail hr { margin-left: -7px; }
.flash { height: 34px; background: #1d8102; color: #fff; display: flex; align-items: center; gap: 6px; padding: 0 12px 0 8px; border-bottom: 1px solid #879596; }
.flash b { font-family: var(--strong); font-size: 9px; font-weight: 700; }
.flash svg { width: 11px; height: 11px; }
.flash .fx { margin-left: auto; width: 10px; height: 10px; }

.crumbs { display: flex; align-items: center; gap: 8px; color: #687078; }
.crumbs a { border-bottom: 1px solid #0073bb; line-height: 12px; }
.crumbs b { font-weight: 500; }
.crumbs svg { width: 7px; height: 10px; }
.shot-ec2 .crumbs { gap: 7px; }
.shot-ec2 .crumbs a { line-height: 11px; }
.inf { font-family: var(--strong); font-size: 8px; font-weight: 700; }
.shot-ec2 .inf { font-size: 7px; }
.n { font-weight: 400; color: #687078; }

.headline { display: flex; justify-content: space-between; align-items: flex-start; padding-top: 13px; height: 71px; }
.headline h1 { font-family: var(--chrome); font-size: 19px; line-height: 26px; font-weight: 400; }
.headline p { color: #545b64; }
.headline .btn { margin-top: 4px; }

.btn { height: 22px; padding: 0 14px; border: 1px solid #545b64; border-radius: 2px; background: #fff; color: #545b64; font-family: var(--strong); font-weight: 600; display: inline-flex; align-items: center; justify-content: center; gap: 5px; white-space: nowrap; }
.btn svg { width: 8px; height: 8px; }
.btn.sq { width: 35px; padding: 0; }
.btn.sq svg { width: 11px; height: 11px; }
.btn:disabled { border-color: #d5dbdb; color: #aab7b8; }
.btns { display: flex; gap: 5px; }
.shot-ec2 .btn { height: 17px; padding: 0 12px; font-size: 8px; font-weight: 700; gap: 7px; }
.shot-ec2 .btn svg { width: 6px; height: 6px; }
.shot-ec2 .btn.sq { width: 30px; padding: 0; }
.shot-ec2 .btn.sq svg { width: 10px; height: 10px; }
.btn.primary { background: #ff9900; border-color: #ff9900; color: #16191f; }

.card { position: relative; background: #fff; border: 1px solid #d5dbdb; border-top-color: #eaeded; border-bottom: 1px solid #879596; }
.card-head { display: flex; justify-content: space-between; align-items: flex-start; background: #fafafa; border-bottom: 1px solid #eaeded; height: 44px; padding: 10px 14px 0; }
.card h2 { font-family: var(--chrome); font-size: 12px; line-height: 20px; font-weight: 700; }
.sub { position: relative; font-size: 8px; font-family: var(--chrome); color: #687078; margin-top: 3px; }
.shot-ec2 .card { margin-top: 6px; }
.shot-ec2 .card-head { height: 41px; padding: 5px 12px 0 11px; }
.shot-ec2 .card h2 { font-family: var(--strong); font-size: 11px; line-height: 17px; font-weight: 600; }
.shot-ec2 .sub { font-size: 7px; margin: 0; }

.cols { display: grid; grid-template-columns: repeat(3, 1fr); align-items: start; padding: 4px 7px 8px; }
.cols dl { padding: 9px 0 4px 7px; border-right: 1px solid #eaeded; min-height: 108px; }
.cols dl:last-child { border: 0; }
.cols dt { color: #545b64; min-height: 15px; }
.cols dd { line-height: 17px; white-space: nowrap; }
.cols .tall { height: 61px; }
.cols dd svg { width: 10px; height: 10px; }
.cols .cp { display: flex; gap: 5px; padding-left: 3px; }
.cols .cp svg { margin-top: 4px; }
.cols .cp span { line-height: 15px; padding-top: 1px; }
.shot-ec2 .cols { padding: 2px 7px 4px; }
.shot-ec2 .cols dl { padding: 7px 0 3px 5px; min-height: 0; display: grid; gap: 10px; }
.shot-ec2 .cols dl > div { height: 27px; }
.shot-ec2 .cols .tall { height: 41px; }
.shot-ec2 .cols .taller { height: 55px; }
.shot-ec2 .cols dt { min-height: 13px; }
.shot-ec2 .cols dd { line-height: 14px; }
.shot-ec2 .cols .more { line-height: 16px; }
.shot-ec2 .cols dd svg { width: 9px; height: 9px; margin: -2px 2px 0; }
.shot-ec2 .cols dd > svg { margin-right: 5px; }
.shot-ec2 .cols .run svg { margin: -2px 3px 0 0; }
.shot-ec2 .cols dd .ii { margin: -2px 3px 0 0; }
.shot-ec2 .cols .run { color: #1d8102; }
.shot-ec2 .more-cols { padding-top: 0; }

.tabs { display: flex; align-items: center; height: 39px; border-bottom: 1px solid #aab7b8; margin-top: 13px; font-family: var(--strong); font-weight: 600; }
.tabs a { color: #545b64; height: 21px; line-height: 21px; padding: 0 14px; border-right: 1px solid #aab7b8; position: relative; }
.tabs a:last-child { border: 0; }
.tabs .on { color: #0073bb; }
.tabs .on::after { content: ""; position: absolute; left: 1px; right: 0; bottom: -9px; height: 2px; background: #16191f; }
.shot-ec2 .tabs { margin: 0; height: 25px; background: #fafafa; border-top: 1px solid #eaeded; border-bottom-color: #eaeded; font-size: 8px; font-weight: 700; }
.shot-ec2 .tabs a { height: 13px; line-height: 13px; padding: 0 12px; }
.shot-ec2 .tabs .on::after { bottom: -6px; }
.sect { font-family: var(--strong); font-size: 8px; font-weight: 700; color: #545b64; padding: 10px 0 0 12px; }
.sect > svg { width: 6px; height: 6px; margin: -2px 5px 0 0; }

/* Aktionsmenü */
.menu { position: absolute; right: 12px; top: 22px; width: 179px; background: #fff; border: 1px solid #c5cacb; border-bottom-color: #879596; color: #545b64; }
.menu li { height: 19px; line-height: 18px; padding-left: 12px; display: flex; align-items: center; }
.menu li svg { width: 7px; height: 8px; margin: 0 6px 0 auto; }
.menu .g { border-top: 1px solid #eaeded; font-family: var(--strong); font-size: 8px; font-weight: 700; }
.menu .sel { background: #f2f3f3; border: 1px solid #687078; color: #16191f; }
.submenu { right: 190px; top: 98px; width: 142px; }
.menu .off { color: #aab7b8; }
.cursor { position: absolute; right: 275px; top: 150px; width: 12px; height: 15px; }

.foot { flex: none; height: 20px; background: #232f3e; color: #fff; display: flex; align-items: center; gap: 16px; padding: 0 9px 0 8px; font-size: 7px; font-family: var(--chrome); }
.foot a { color: #fff; display: flex; align-items: center; gap: 4px; }
.foot svg { width: 9px; height: 9px; }
.copyr { margin-left: auto; margin-right: 3px; }
.taskbar { flex: 1; display: flex; align-items: center; padding: 0 7px 3px 2px; gap: 15px; color: #fff; }
.who { position: relative; width: 81px; height: 17px; margin: -7px -6px 0 0; padding: 0 4px; background: #101010; border-radius: 2px; display: flex; align-items: center; justify-content: space-between; font-family: var(--chrome); font-size: 8px; white-space: nowrap; }
.who svg { width: 11px; height: 11px; }
.who .ghost { position: absolute; left: 0; top: 0; width: 80px; height: 17px; }
.who span { position: relative; }
.app { width: 15px; height: 15px; }
.app-on { align-self: stretch; width: 29px; margin: 0 -7px; background: #484848; display: flex; align-items: center; justify-content: center; }
.app-np { align-self: stretch; width: 33px; margin: 0 -9px -3px; border-bottom: 3px solid #484848; display: flex; align-items: center; justify-content: center; }
.clock { margin-left: auto; display: flex; align-items: center; gap: 8px; text-align: center; font-size: 7px; line-height: 11px; }
.clock svg { width: 12px; height: 12px; }

/* Filter und Tabellen */
.box { display: flex; align-items: center; gap: 6px; height: 22px; border: 1px solid #687078; border-radius: 2px; background: #fff; padding: 0 5px; color: #16191f; }
.box svg { width: 10px; height: 10px; color: #545b64; }
.box input { flex: 1; }
.box input::placeholder { color: #687078; }
.tabs + .policies { margin-top: 12px; }
.policies .card-head { height: 57px; border: 0; }
.filter { display: flex; align-items: flex-end; gap: 8px; background: #fafafa; padding: 0 16px 12px 14px; }
.grow { width: 45.3%; }
.fsel { width: 22.6%; }
.fsel .box { margin-top: 3px; }
.fsel select { flex: 1; }
.fsel .ca { width: 7px; height: 7px; margin-right: 2px; }
.pager { margin-left: auto; display: flex; align-items: center; gap: 13px; height: 22px; color: #16191f; }
.pager b { font-weight: 400; }
.pager > svg { width: 8px; height: 11px; color: #aab7b8; }
.pager button { height: 22px; padding-left: 9px; border-left: 1px solid #eaeded; color: #545b64; display: flex; align-items: center; }
.pager button svg { width: 12px; height: 12px; }
table { width: 100%; border-collapse: collapse; table-layout: fixed; }
.c0 { width: 37px; }
.c1 { width: 32.2%; }
thead { background: #fafafa; }
th { padding: 6px 0; border: 1px solid #eaeded; border-width: 1px 0; text-align: left; color: #545b64; font-family: var(--strong); font-weight: 600; font-size: 10px; }
.th { display: flex; align-items: center; justify-content: space-between; padding: 0 8px 0 15px; border-right: 1px solid #687078; height: 15px; }
.th.light { border-color: #eaeded; padding: 0 0 0 14px; }
.th.last { border: 0; padding-right: 10px; }
.th.dark { color: #16191f; }
.th > svg { width: 8px; height: 8px; }
.th span svg { width: 10px; height: 10px; margin-top: -2px; }
td { padding: 0 0 0 15px; }
.empty { height: 40px; padding: 0 0 2px; text-align: center; font-family: var(--strong); font-size: 9px; font-weight: 700; color: #687078; }
input[type=checkbox] { width: 10px; height: 10px; border-radius: 1px; background: #0073bb; display: block; position: relative; }
input[type=checkbox]:disabled { background: #d5dbdb; }
input[type=checkbox]:checked::after { content: ""; position: absolute; left: 3px; top: 1px; width: 4px; height: 7px; border: solid #fff; border-width: 0 1px 1px 0; transform: rotate(40deg); }
.marked { background: linear-gradient(#fbff00, #fbff00) 0 100% / 100% 58% no-repeat; padding: 0 6px 7px; margin: 0 -6px; }
.ring { position: absolute; right: 21px; top: -16px; width: 190px; height: 86px; mix-blend-mode: multiply; pointer-events: none; }

/* Richtlinie anfügen */
.burger { width: 28px; flex: none; background: #fff; border-right: 1px solid #c5cacb; padding: 6px 0 0 9px; color: #545b64; }
.burger svg { width: 9px; height: 9px; }
.shot-attach .page { padding: 15px 27px 0; }
.shot-attach h1 { font-family: var(--chrome); font-size: 12px; line-height: 18px; font-weight: 700; margin: 14px 0 17px; }
.shot-attach .card h2 { line-height: 22px; }
.shot-attach .fold { background: #fafafa; height: 45px; padding: 10px 14px; margin-bottom: 14px; }
.fold h2 svg { width: 7px; height: 7px; margin: -2px 8px 0 0; }
.shot-attach .card-head { height: 41px; }
.shot-attach .grow { width: 46%; }
.shot-attach .fsel { width: 23%; }
.shot-attach .c1 { width: 39.5%; }
.hits { line-height: 22px; }
.shot-attach th { padding: 6px 0; }
.shot-attach .th { height: 14px; }
.shot-attach td { height: 28px; border: 1px solid #0073bb; border-width: 1px 0; background: #f1faff; }
.shot-attach td:first-child { padding-left: 14px; border-left-width: 1px; }
.shot-attach td:last-child { border-right-width: 1px; }
.shot-attach td a { border-bottom: 1px solid #0073bb; }
.plusbox { width: 9px; height: 10px; margin: -2px 15px 0 3px; color: #545b64; }
.actions { display: flex; justify-content: flex-end; gap: 8px; margin-top: 14px; }
```
